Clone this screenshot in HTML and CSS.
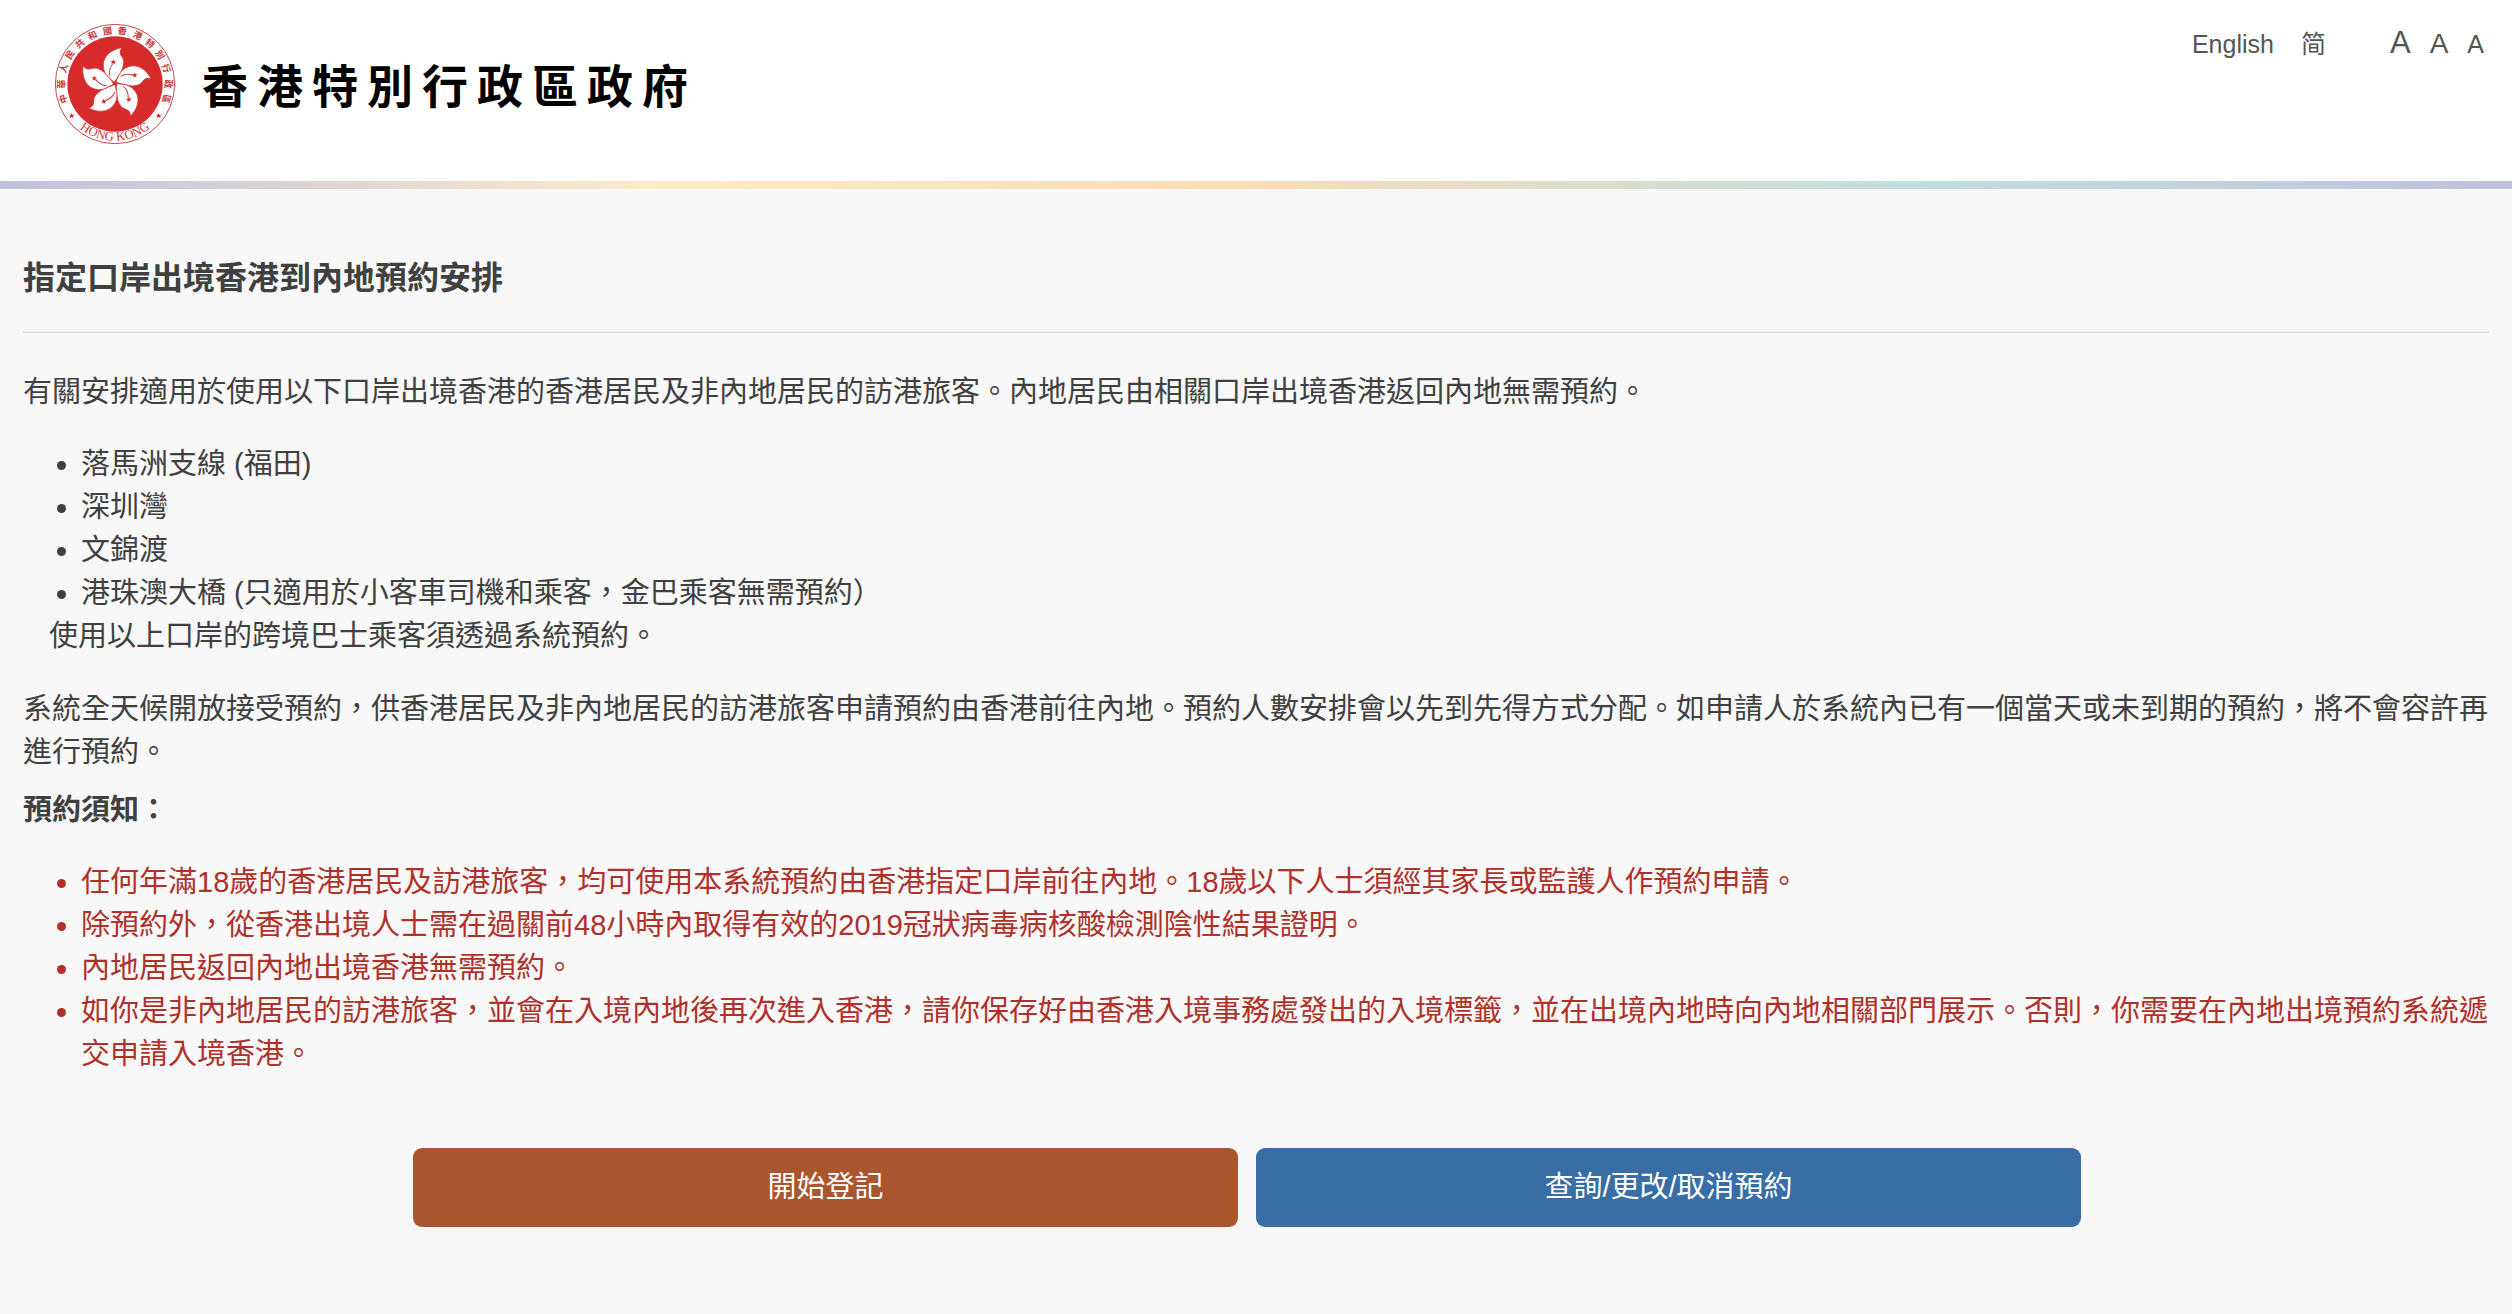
FILE: index.html
```html
<!DOCTYPE html>
<html lang="zh-HK">
<head>
  <meta charset="UTF-8">
  <meta name="viewport" content="width=device-width, initial-scale=1.0">
  <title>指定口岸出境香港到內地預約安排</title>
  <link rel="stylesheet" href="styles.css">
</head>
<body>

  <header class="header">
    <div class="brand">
      <svg class="emblem" viewBox="44 40 366 366" aria-hidden="true">
        <defs>
          <g id="petal">
            <path class="petal" d="M21 -107 C-8 -103 -35 -84 -35 -55 C-35 -38 -28 -26 -18 -17 C-12 -12 -8 -8 -3 -3 C1 -9 7 -15 12 -25 C20 -38 27 -50 26 -66 C25 -78 16 -84 15 -92 C15 -98 18 -103 21 -107 Z"/>
            <path class="stamen" d="M-5 -60 C-14 -50 -19 -38 -15 -22"/>
            <path class="star" d="M-5 -73 L-3 -67 L3 -67 L-1 -63 L1 -57 L-5 -61 L-11 -57 L-9 -63 L-13 -67 L-7 -67 Z"/>
          </g>
          <path id="arc" d="M57 223 A170 170 0 0 0 397 223"/>
        </defs>
        <circle class="ring" cx="227" cy="223" r="179"/>
        <circle class="disc" cx="227" cy="223" r="143"/>
        <g transform="translate(227 221)">
          <use href="#petal"/>
          <use href="#petal" transform="rotate(72)"/>
          <use href="#petal" transform="rotate(144)"/>
          <use href="#petal" transform="rotate(216)"/>
          <use href="#petal" transform="rotate(288)"/>
          <circle class="disc" r="6"/>
        </g>
        <g class="ring-text" transform="translate(227 223)">
          <text y="-151" transform="rotate(-106)">中</text>
          <text y="-151" transform="rotate(-90)">華</text>
          <text y="-151" transform="rotate(-73)">人</text>
          <text y="-151" transform="rotate(-57)">民</text>
          <text y="-151" transform="rotate(-41)">共</text>
          <text y="-151" transform="rotate(-25)">和</text>
          <text y="-151" transform="rotate(-8)">國</text>
          <text y="-151" transform="rotate(8)">香</text>
          <text y="-151" transform="rotate(25)">港</text>
          <text y="-151" transform="rotate(41)">特</text>
          <text y="-151" transform="rotate(57)">別</text>
          <text y="-151" transform="rotate(73)">行</text>
          <text y="-151" transform="rotate(90)">政</text>
          <text y="-151" transform="rotate(106)">區</text>
        </g>
        <path class="star" d="M97 309 L99 315 L106 315 L101 319 L103 326 L97 322 L91 326 L93 319 L88 315 L95 315 Z"/>
        <path class="star" d="M358 309 L360 315 L367 315 L362 319 L364 326 L358 322 L352 326 L354 319 L349 315 L356 315 Z"/>
        <text class="ring-name"><textPath href="#arc" startOffset="50%">HONG KONG</textPath></text>
      </svg>
      <span class="brand-name">香港特別行政區政府</span>
    </div>

    <nav class="tools">
      <a class="lang" href="#">English</a>
      <a class="lang" href="#" lang="zh-Hans">简</a>
      <div class="sizes">
        <button type="button" class="size size-l">A</button>
        <button type="button" class="size size-m">A</button>
        <button type="button" class="size size-s">A</button>
      </div>
    </nav>
  </header>
  <div class="rainbow"></div>

  <main class="container">
    <h1>指定口岸出境香港到內地預約安排</h1>

    <p>有關安排適用於使用以下口岸出境香港的香港居民及非內地居民的訪港旅客。內地居民由相關口岸出境香港返回內地無需預約。</p>

    <ul class="points">
      <li>落馬洲支線 (福田)</li>
      <li>深圳灣</li>
      <li>文錦渡</li>
      <li>港珠澳大橋 (只適用於小客車司機和乘客，金巴乘客無需預約）</li>
    </ul>
    <p class="points-note">使用以上口岸的跨境巴士乘客須透過系統預約。</p>

    <p>系統全天候開放接受預約，供香港居民及非內地居民的訪港旅客申請預約由香港前往內地。預約人數安排會以先到先得方式分配。如申請人於系統內已有一個當天或未到期的預約，將不會容許再進行預約。</p>

    <h2>預約須知：</h2>
    <ul class="points notice">
      <li>任何年滿18歲的香港居民及訪港旅客，均可使用本系統預約由香港指定口岸前往內地。18歲以下人士須經其家長或監護人作預約申請。</li>
      <li>除預約外，從香港出境人士需在過關前48小時內取得有效的2019冠狀病毒病核酸檢測陰性結果證明。</li>
      <li>內地居民返回內地出境香港無需預約。</li>
      <li>如你是非內地居民的訪港旅客，並會在入境內地後再次進入香港，請你保存好由香港入境事務處發出的入境標籤，並在出境內地時向內地相關部門展示。否則，你需要在內地出境預約系統遞交申請入境香港。</li>
    </ul>

    <div class="actions">
      <button type="button" class="btn btn-start">開始登記</button>
      <button type="button" class="btn btn-enquiry">查詢/更改/取消預約</button>
    </div>
  </main>

</body>
</html>
```
FILE: styles.css
```css
* {
  box-sizing: border-box;
}

body {
  margin: 0;
  background: #f8f8f8;
  color: #404040;
  font-family: "Liberation Sans", "Noto Sans CJK TC", sans-serif;
  font-size: 29px;
  line-height: 43px;
}

/* header */
.header {
  display: flex;
  justify-content: space-between;
  align-items: flex-start;
  padding: 23px 28px 36px 54px;
  background: #fff;
}

.brand {
  display: flex;
  align-items: center;
  gap: 26px;
}

.emblem {
  width: 122px;
  height: 122px;
}

.ring {
  fill: #fff;
  stroke: #c9474b;
  stroke-width: 3;
}

.disc,
.star {
  fill: #d62b2b;
}

.petal {
  fill: #fff;
  stroke: #d62b2b;
  stroke-width: 2;
}

.stamen {
  fill: none;
  stroke: #b5484b;
  stroke-width: 3;
}

.ring-text {
  fill: #c9353a;
  font-family: "Noto Sans CJK TC", sans-serif;
  font-size: 27px;
  font-weight: bold;
  text-anchor: middle;
}

.ring-name {
  fill: #c9353a;
  font-family: "Liberation Serif", serif;
  font-size: 38px;
  text-anchor: middle;
}

.brand-name {
  padding-top: 6px;
  color: #000;
  font-size: 46px;
  font-weight: bold;
  line-height: 60px;
  letter-spacing: 9px;
}

.tools {
  display: flex;
  align-items: baseline;
  gap: 27px;
}

.lang {
  color: #555;
  font-size: 25px;
  text-decoration: none;
}

.lang:hover {
  text-decoration: underline;
}

.sizes {
  display: flex;
  align-items: baseline;
  gap: 19px;
  margin-left: 37px;
}

.size {
  padding: 0;
  border: none;
  background: none;
  color: #555;
  font-family: inherit;
  cursor: pointer;
}

.size-l {
  font-size: 31px;
}

.size-m {
  font-size: 28px;
}

.size-s {
  font-size: 25px;
}

.rainbow {
  height: 8px;
  background: linear-gradient(to right, #c0c0df, #fdebc8 26%, #f9dcb8 50%, #bfe0df 76%, #c0c0df);
}

/* content */
.container {
  padding: 65px 23px;
}

h1 {
  margin: 0 0 38px;
  padding-bottom: 30px;
  border-bottom: 1px solid #d8d8d8;
  font-size: 32px;
  line-height: 48px;
}

h2 {
  margin: 15px 0 29px;
  font-size: 29px;
}

p {
  margin: 0;
}

.points {
  margin: 29px 0 0;
  padding-left: 58px;
}

.points-note {
  margin-bottom: 30px;
  padding-left: 26px;
}

.notice {
  color: #b0302a;
}

.actions {
  display: flex;
  justify-content: center;
  gap: 18px;
  margin-top: 72px;
  padding-right: 18px;
}

.btn {
  width: calc(100% / 3 + 9px);
  padding: 18px;
  border: none;
  border-radius: 9px;
  color: #fff;
  font-family: inherit;
  font-size: 29px;
  line-height: 43px;
  cursor: pointer;
}

.btn-start {
  background: #a9562f;
}

.btn-enquiry {
  background: #386da5;
}
```
